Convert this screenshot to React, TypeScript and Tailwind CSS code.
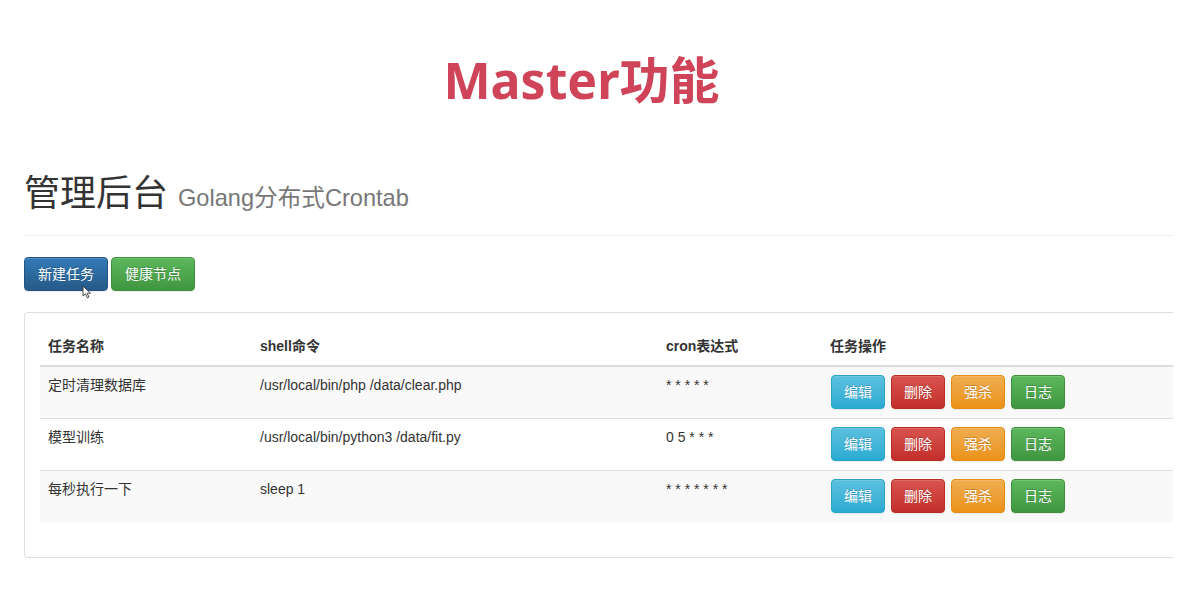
import React from 'react';

type Job = { name: string; command: string; cron: string };

const jobs: Job[] = [
  { name: '定时清理数据库', command: '/usr/local/bin/php /data/clear.php', cron: '* * * * *' },
  { name: '模型训练', command: '/usr/local/bin/python3 /data/fit.py', cron: '0 5 * * *' },
  { name: '每秒执行一下', command: 'sleep 1', cron: '* * * * * * *' },
];

const btnBase =
  'inline-flex items-center justify-center h-[34px] px-[12px] rounded-[4px] border text-[14px] text-white [text-shadow:0_-1px_0_rgba(0,0,0,0.2)] shadow-[inset_0_1px_0_rgba(255,255,255,0.15),0_1px_1px_rgba(0,0,0,0.075)]';

const btnInfo = 'bg-gradient-to-b from-[#5bc0de] to-[#2aabd2] border-[#28a4c9]';
const btnDanger = 'bg-gradient-to-b from-[#d9534f] to-[#c12e2a] border-[#b92c28]';
const btnWarning = 'bg-gradient-to-b from-[#f0ad4e] to-[#eb9316] border-[#e38d13]';
const btnSuccess = 'bg-gradient-to-b from-[#5cb85c] to-[#419641] border-[#3e8f3e]';
const btnPrimary = 'bg-gradient-to-b from-[#337ab7] to-[#265a88] border-[#245580]';

export default function App() {
  return (
    <div className="w-[1181px] h-[597px] bg-white overflow-hidden text-[#333] font-['Liberation_Sans','Noto_Sans_CJK_SC',sans-serif]">
      {/* Slide title */}
      <div className="h-[160px] pt-[48px] pr-[18px] flex justify-center">
        <div className="text-[#cf4459] text-[50px] leading-[64px] font-bold font-['Noto_Sans','Noto_Sans_CJK_SC',sans-serif]">
          Master功能
        </div>
      </div>

      <div className="w-[1173px] pl-[24px] overflow-hidden">
        <div className="w-[1190px]">
          {/* Page header */}
          <div className="h-[76px] border-b border-[#eee] pt-[14px]">
            <h1 className="text-[36px] leading-[40px] font-normal">
              管理后台 <small className="text-[23.6px] text-[#777]">Golang分布式Crontab</small>
            </h1>
          </div>

          {/* Toolbar */}
          <div className="pt-[21px] flex gap-[3px] relative">
            <button className={`${btnBase} ${btnPrimary} w-[84px] px-0`}>新建任务</button>
            <button className={`${btnBase} ${btnSuccess} w-[84px] px-0`}>健康节点</button>
            <svg className="absolute left-[58px] top-[49px]" width="10" height="14" viewBox="0 0 10 14">
              <path d="M1 1 L1 11 L3.5 8.8 L5.3 12.8 L6.9 12.1 L5.2 8.2 L8.5 8.2 Z" fill="#fff" stroke="#333" strokeWidth="0.9" />
            </svg>
          </div>

          {/* Panel */}
          <div className="mt-[21px] border border-[#ddd] rounded-[4px] shadow-[0_1px_1px_rgba(0,0,0,0.05)] p-[15px] pb-[35px]">
            <table className="w-[1150px] border-collapse text-[14px] leading-[20px]">
              <thead>
                <tr className="border-b-2 border-[#ddd]">
                  <th className="w-[212px] text-left font-bold px-[8px] pt-[8px] pb-[9px]">任务名称</th>
                  <th className="w-[406px] text-left font-bold px-[8px] pt-[8px] pb-[9px]">shell命令</th>
                  <th className="w-[164px] text-left font-bold px-[8px] pt-[8px] pb-[9px]">cron表达式</th>
                  <th className="text-left font-bold px-[8px] pt-[8px] pb-[9px]">任务操作</th>
                </tr>
              </thead>
              <tbody>
                {jobs.map((job, i) => (
                  <tr key={job.name} className={`border-t border-[#ddd] h-[52px] ${i % 2 === 0 ? 'bg-[#f9f9f9]' : 'bg-white'}`}>
                    <td className="p-[8px] align-top">{job.name}</td>
                    <td className="p-[8px] align-top">{job.command}</td>
                    <td className="p-[8px] align-top">{job.cron}</td>
                    <td className="px-[8px] py-[8px] align-top">
                      <div className="flex gap-[6px] pl-[1px]">
                        <button className={`${btnBase} ${btnInfo}`}>编辑</button>
                        <button className={`${btnBase} ${btnDanger}`}>删除</button>
                        <button className={`${btnBase} ${btnWarning}`}>强杀</button>
                        <button className={`${btnBase} ${btnSuccess}`}>日志</button>
                      </div>
                    </td>
                  </tr>
                ))}
              </tbody>
            </table>
          </div>
        </div>
      </div>
    </div>
  );
}
